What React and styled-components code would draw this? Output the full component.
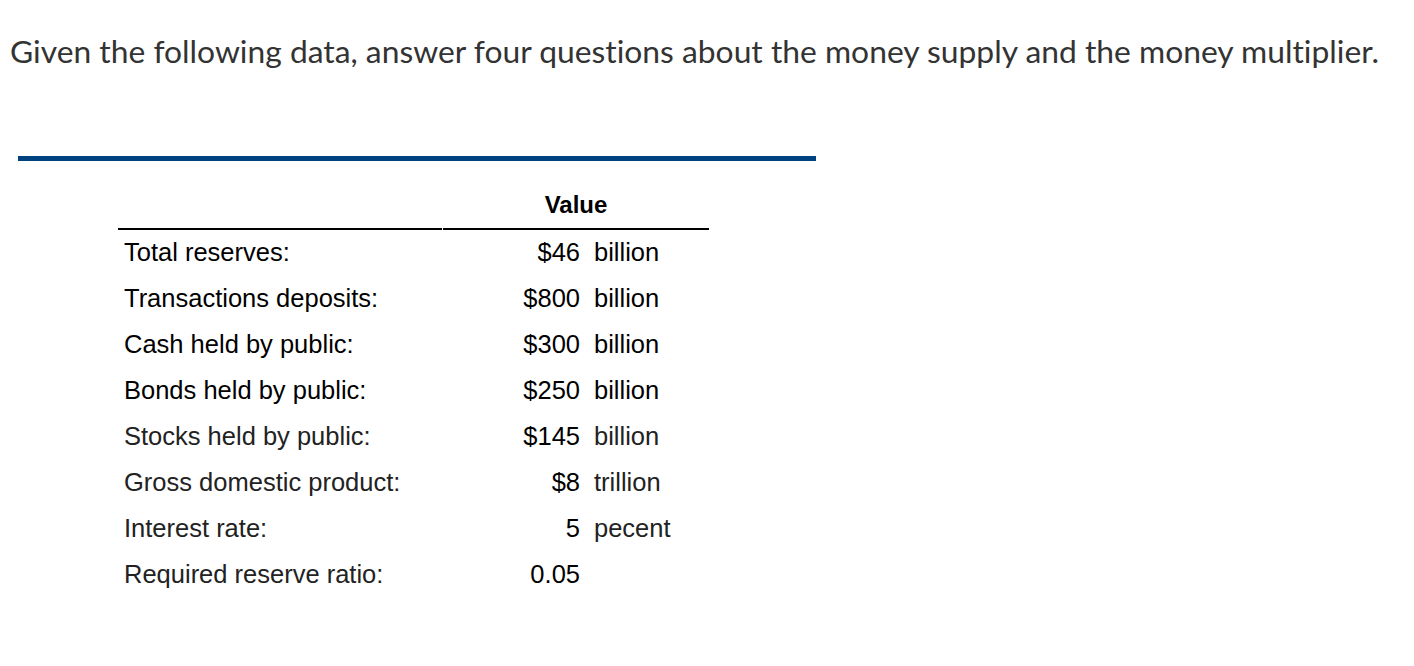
import styled, { createGlobalStyle } from 'styled-components'

const GlobalStyle = createGlobalStyle`
  body {
    margin: 0;
    background: #fff;
  }
`

const Page = styled.div`
  width: 1414px;
  height: 666px;
  overflow: hidden;
  padding-top: 30px;
  box-sizing: border-box;
`

const Prompt = styled.p`
  margin: 0 0 0 10px;
  font-family: Lato, 'Open Sans', sans-serif;
  font-size: 31.8px;
  font-variant-ligatures: none;
  line-height: 42px;
  color: #333;
  white-space: nowrap;
`

const Rule = styled.div`
  margin: 84px 0 0 18px;
  width: 798px;
  height: 5px;
  background: #00427f;
`

const DataTable = styled.div`
  display: grid;
  grid-template-columns: 325px 144px 122px;
  margin: 29px 0 0 118px;
  font-family: 'Liberation Sans', Arial, sans-serif;
  font-size: 25.5px;
`

const HeadCell = styled.div`
  height: 37px;
  padding-top: 1px;
  border-bottom: 2px solid #000;
  margin-right: ${({ $gap }) => ($gap ? '1px' : '0')};
  display: flex;
  align-items: flex-start;
  justify-content: center;
  font-weight: bold;
  font-size: 24px;
  color: #000;
  grid-column: ${({ $span }) => ($span ? 'span 2' : 'auto')};
`

const Cell = styled.div`
  height: 46px;
  box-sizing: border-box;
  display: flex;
  align-items: center;
  justify-content: ${({ $align }) => ($align === 'right' ? 'flex-end' : 'flex-start')};
  padding: ${({ $align }) => ($align === 'right' ? '0 7px 2px 0' : '0 0 2px 6px')};
  color: ${({ $muted }) => ($muted ? '#222' : '#000')};
  white-space: nowrap;
`

const UnitCell = styled(Cell)`
  padding: 0 0 2px 7px;
`

const rows = [
  ['Total reserves:', '$46', 'billion'],
  ['Transactions deposits:', '$800', 'billion'],
  ['Cash held by public:', '$300', 'billion'],
  ['Bonds held by public:', '$250', 'billion'],
  ['Stocks held by public:', '$145', 'billion', true],
  ['Gross domestic product:', '$8', 'trillion', true],
  ['Interest rate:', '5', 'pecent', true],
  ['Required reserve ratio:', '0.05', '', true]
]

export default function App() {
  return (
    <>
      <GlobalStyle />
      <Page>
        <Prompt>
          Given the following data, answer four questions about the money supply and the money multiplier.
        </Prompt>
        <Rule />
        <DataTable>
          <HeadCell $gap />
          <HeadCell $span>Value</HeadCell>
          {rows.map(([label, value, unit, muted]) => (
            <Row key={label} label={label} value={value} unit={unit} muted={muted} />
          ))}
        </DataTable>
      </Page>
    </>
  )
}

function Row({ label, value, unit, muted }) {
  return (
    <>
      <Cell $muted={muted}>{label}</Cell>
      <Cell $align='right'>{value}</Cell>
      <UnitCell $muted={muted}>{unit}</UnitCell>
    </>
  )
}
